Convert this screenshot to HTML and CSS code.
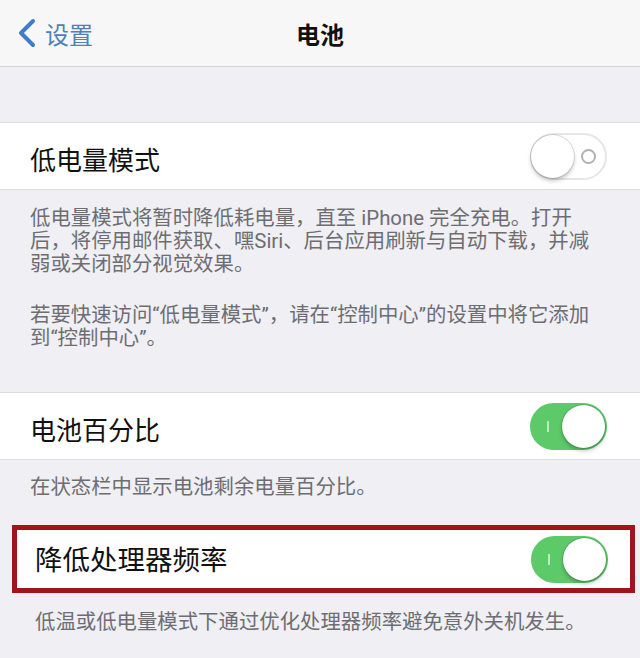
FILE: index.html
```html
<!DOCTYPE html>
<html lang="zh-CN">
<head>
    <meta charset="UTF-8">
    <meta name="viewport" content="width=device-width, initial-scale=1.0">
    <title>电池</title>
    <link rel="stylesheet" href="styles.css">
</head>
<body>

<header class="nav">
    <a class="back" href="#">
        <svg class="chevron" width="22" height="30" viewBox="0 0 22 30">
            <path d="M17 3 L5 15 L17 27" fill="none" stroke="currentColor" stroke-width="4" stroke-linecap="round" stroke-linejoin="round"/>
        </svg>
        <span>设置</span>
    </a>
    <h1>电池</h1>
    <span></span>
</header>

<div class="spacer"></div>

<section class="group">
    <div class="cell">
        <span class="label">低电量模式</span>
        <span class="switch off"><span class="knob"></span><span class="ring"></span></span>
    </div>
    <div class="note note-long">
        <p>低电量模式将暂时降低耗电量，直至 iPhone 完全充电。打开<br>后，将停用邮件获取、嘿Siri、后台应用刷新与自动下载，并减<br>弱或关闭部分视觉效果。</p>
        <p>若要快速访问“低电量模式”，请在“控制中心”的设置中将它添加<br>到“控制中心”。</p>
    </div>
</section>

<section class="group">
    <div class="cell">
        <span class="label">电池百分比</span>
        <span class="switch on"><span class="mark"></span><span class="knob"></span></span>
    </div>
    <div class="note">
        <p>在状态栏中显示电池剩余电量百分比。</p>
    </div>
</section>

<section class="group">
    <div class="cell cell-marked">
        <span class="label">降低处理器频率</span>
        <span class="switch on"><span class="mark"></span><span class="knob"></span></span>
    </div>
    <div class="note note-last">
        <p>低温或低电量模式下通过优化处理器频率避免意外关机发生。</p>
    </div>
</section>

</body>
</html>
```

FILE: styles.css
```css
* {
    margin: 0;
    padding: 0;
    box-sizing: border-box;
}

body {
    background: #efeff4;
    font-family: Roboto, "Noto Sans CJK SC", sans-serif;
    color: #111;
    height: 658px;
    overflow: hidden;
}

.nav {
    height: 67px;
    background: #f7f7f7;
    border-bottom: 1px solid #d4d4d6;
    display: grid;
    grid-template-columns: 1fr auto 1fr;
    align-items: center;
}

.back {
    display: flex;
    align-items: center;
    gap: 7px;
    padding-left: 16px;
    color: #3d7dcc;
    text-decoration: none;
    font-size: 24px;
}

.back span {
    color: #4f82b4;
    margin-top: 1px;
}

.nav h1 {
    font-size: 24px;
    font-weight: 700;
    color: #111;
}

.spacer {
    height: 55px;
}

.cell {
    height: 68px;
    background: #fff;
    border-top: 1px solid #dcdcdf;
    border-bottom: 1px solid #dcdcdf;
    display: flex;
    align-items: center;
    justify-content: space-between;
    padding: 0 33px 0 30px;
}

.label {
    font-size: 26px;
    margin-top: 4px;
}

.cell-marked {
    margin: 0 5px 0 12px;
    border: 5px solid #a0141c;
    padding: 0 22px 0 18px;
}

.cell-marked .label {
    font-size: 27.5px;
    margin-top: -2px;
}

.note {
    padding: 16px 20px 26px 30px;
    font-size: 20.4px;
    line-height: 23px;
    color: #6d6d72;
}

.note-long {
    padding: 17px 20px 42px 30px;
}

.note-long p + p {
    margin-top: 28px;
}

.note-last {
    padding-top: 18px;
    padding-left: 35px;
}

.switch {
    position: relative;
    width: 77px;
    height: 47px;
    border-radius: 24px;
    flex-shrink: 0;
}

.switch .knob {
    position: absolute;
    width: 43px;
    height: 43px;
    border-radius: 50%;
    background: #fff;
    box-shadow: 0 0 0 1px rgba(0, 0, 0, 0.12), 0 3px 4px rgba(0, 0, 0, 0.22);
}

.switch.off {
    background: #fff;
    border: 2px solid #e6e6e9;
}

.switch.off .knob {
    left: -1px;
    top: 0;
}

.switch.off .ring {
    position: absolute;
    right: 9px;
    top: 14px;
    width: 15px;
    height: 15px;
    border: 2px solid #b2b2b2;
    border-radius: 50%;
}

.switch.on {
    background: #5dca6a;
}

.switch.on .knob {
    right: 2px;
    top: 2px;
}

.switch.on .mark {
    position: absolute;
    left: 17px;
    top: 18px;
    width: 2px;
    height: 11px;
    background: rgba(255, 255, 255, 0.6);
}
```
